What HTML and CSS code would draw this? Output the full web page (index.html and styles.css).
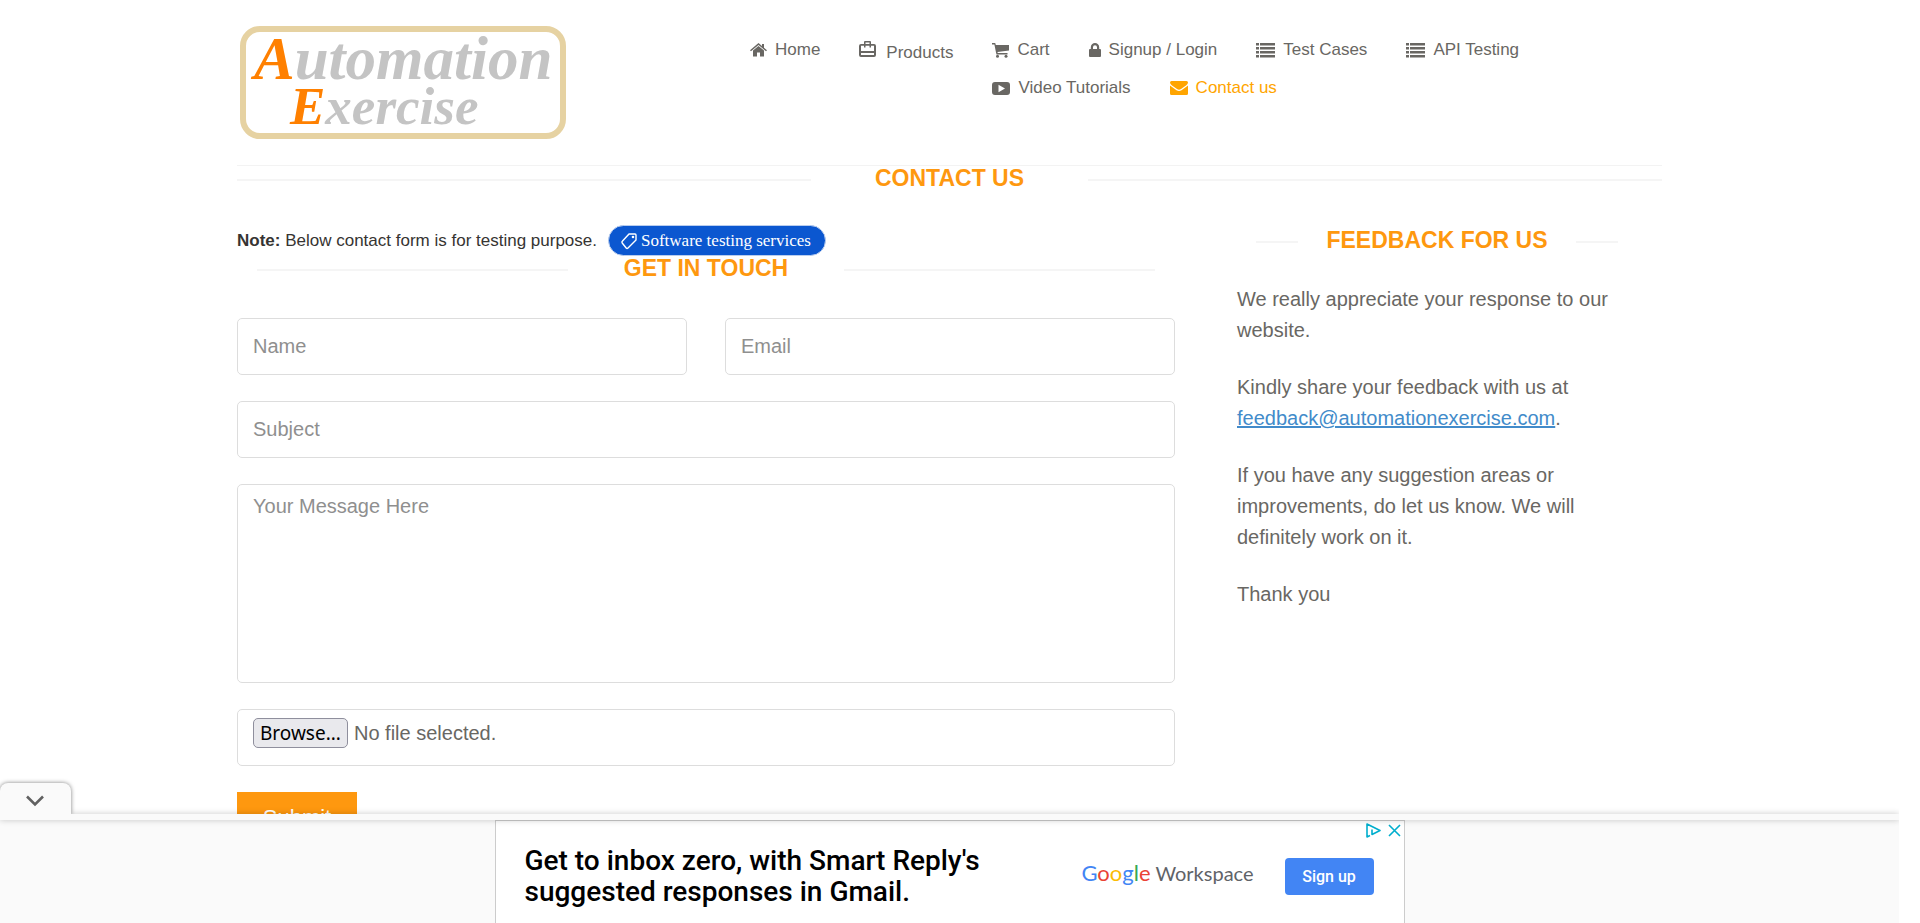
FILE: index.html
```html
<!DOCTYPE html>
<html lang="en">
<head>
<meta charset="utf-8">
<title>Automation Exercise - Contact Us</title>
<link rel="stylesheet" href="styles.css">
</head>
<body>
<div class="page">
  <header class="container header">
    <a class="logo" href="#">
      <span class="logo-line"><span class="logo-cap">A</span>utomation</span>
      <span class="logo-line logo-second"><span class="logo-cap">E</span>xercise</span>
    </a>
    <nav class="nav">
      <ul class="nav-list">
        <li><a href="#"><svg class="icon" width="17" height="14" viewBox="0 0 17 14"><path d="M8.500 3 3 7.600V13.500H7V9.500H10V13.500H14V7.600Z"/><path d="M8.500 0 0 7.200 1 8.300 8.500 2 16 8.300 17 7.200 14 4.700V1H12V3Z"/></svg>Home</a></li>
        <li class="nav-tall"><a href="#"><svg class="icon icon-bag" width="17" height="17" viewBox="0 0 17 17"><path fill-rule="evenodd" d="M5 3V1Q5 0 6 0H11Q12 0 12 1V3H15Q17 3 17 5V14Q17 16 15 16H2Q0 16 0 14V5Q0 3 2 3ZM6.500 3H10.500V1.500H6.500ZM2 4.800V10H15V4.800H12V6.500H10.500V4.800H6.500V6.500H5V4.800ZM2 12V14H15V12Z"/></svg>Products</a></li>
        <li><a href="#"><svg class="icon" width="17" height="15" viewBox="0 0 17 15"><path d="M0 0H3.200L3.800 2H17V7.500L5.500 9 5.700 10H15.500V11.500H4.500L4 9.500 2.400 1.500H0Z"/><circle cx="5.500" cy="13.300" r="1.500"/><circle cx="14" cy="13.300" r="1.500"/></svg>Cart</a></li>
        <li><a href="#"><svg class="icon" width="12" height="15" viewBox="0 0 12 15"><path fill-rule="evenodd" d="M1.800 6V4.200A4.200 4.200 0 0 1 10.200 4.200V6H11Q12 6 12 7V13Q12 14 11 14H1Q0 14 0 13V7Q0 6 1 6ZM4 6H8V4.200A2 2 0 0 0 4 4.200Z"/></svg>Signup / Login</a></li>
        <li><a href="#"><svg class="icon" width="19" height="15" viewBox="0 0 19 15"><path d="M0 0H3V2.600H0ZM4 0H19V2.600H4ZM0 4H3V6.600H0ZM4 4H19V6.600H4ZM0 8H3V10.600H0ZM4 8H19V10.600H4ZM0 12H3V14.600H0ZM4 12H19V14.600H4Z"/></svg>Test Cases</a></li>
        <li><a href="#"><svg class="icon" width="19" height="15" viewBox="0 0 19 15"><path d="M0 0H3V2.600H0ZM4 0H19V2.600H4ZM0 4H3V6.600H0ZM4 4H19V6.600H4ZM0 8H3V10.600H0ZM4 8H19V10.600H4ZM0 12H3V14.600H0ZM4 12H19V14.600H4Z"/></svg>API Testing</a></li>
        <li><a href="#"><svg class="icon" width="18" height="13" viewBox="0 0 18 13"><path fill-rule="evenodd" d="M3 0Q9-.4 15 0 18 0 18 3V10Q18 13 15 13 9 13.400 3 13 0 13 0 10V3Q0 0 3 0ZM6.500 2.800V10.200L13 6.500Z"/></svg>Video Tutorials</a></li>
        <li><a class="active" href="#"><svg class="icon" width="18" height="14" viewBox="0 0 18 14"><path d="M1.500 0H16.500Q18 0 18 1.500 18 3 16 4.500L11 8Q9 9.500 7 8L2 4.500Q0 3 0 1.500 0 0 1.500 0Z"/><path d="M0 4.500 6.500 9.200Q9 10.800 11.500 9.200L18 4.500V12.500Q18 14 16.500 14H1.500Q0 14 0 12.500Z"/></svg>Contact us</a></li>
      </ul>
    </nav>
  </header>
  <main class="container main">
    <h2 class="title title-page">Contact Us</h2>
    <div class="columns">
      <section class="contact">
        <p class="note"><span><b>Note:</b> Below contact form is for testing purpose.</span><a class="pill" href="#"><svg width="16" height="18" viewBox="0 0 16 18" fill="none" stroke="#fff" stroke-width="1.400" stroke-linejoin="round"><path d="M8 2H14Q15 2 15 3V8L7 16Q6 17 5.200 16L1.200 11Q.6 10 1.300 9.300Z"/><circle cx="12" cy="5" r=".6"/></svg>Software testing services</a></p>
        <h2 class="title title-form">Get In Touch</h2>
        <form class="form">
          <input class="field" type="text" placeholder="Name" aria-label="Name">
          <input class="field" type="email" placeholder="Email" aria-label="Email">
          <input class="field wide" type="text" placeholder="Subject" aria-label="Subject">
          <textarea class="field message wide" placeholder="Your Message Here" aria-label="Your Message Here"></textarea>
          <label class="field upload wide"><input class="upload-input" type="file"><span class="browse">Browse...</span><span>No file selected.</span></label>
          <button class="submit" type="button">Submit</button>
        </form>
      </section>
      <aside class="feedback">
        <h2 class="title title-feedback">Feedback For Us</h2>
        <p>We really appreciate your response to our website.</p>
        <p>Kindly share your feedback with us at <a href="#">feedback@automationexercise.com</a>.</p>
        <p>If you have any suggestion areas or improvements, do let us know. We will definitely work on it.</p>
        <p>Thank you</p>
      </aside>
    </div>
  </main>
</div>
<div class="anchor">
  <button class="collapse" type="button" aria-label="Hide advertisement"><svg width="18" height="12" viewBox="0 0 18 12"><path d="M1 1.500 9 9.500 17 1.500" fill="none" stroke="#616161" stroke-width="2.600"/></svg></button>
  <div class="anchor-band"></div>
  <div class="anchor-body">
    <div class="ad">
      <p class="ad-text">Get to inbox zero, with Smart Reply's suggested responses in Gmail.</p>
      <p class="brand"><span class="google"><span class="blue">G</span><span class="red">o</span><span class="yellow">o</span><span class="blue">g</span><span class="green">l</span><span class="red">e</span></span> Workspace</p>
      <button class="signup" type="button">Sign up</button>
      <div class="ad-tools">
        <svg width="15" height="15" viewBox="0 0 15 15" fill="none" stroke="#00aecd" stroke-width="1.600" stroke-linejoin="round"><path d="M4 12.500 1 14V1L14 7.500 6 11.500V6.500M6 3.800V5"/></svg>
        <svg width="13" height="13" viewBox="0 0 13 13" fill="none" stroke="#00aecd" stroke-width="1.600"><path d="M1 1 12 12M12 1 1 12"/></svg>
      </div>
    </div>
  </div>
</div>
</body>
</html>
```
FILE: styles.css
```css
* { box-sizing: border-box; }
body {
  margin: 0;
  background: #fff;
  color: #696763;
  font-family: "Liberation Sans", Arial, sans-serif;
  font-size: 17px;
}
p, h2, ul { margin: 0; padding: 0; }
.page { margin-right: 21px; }
.container { max-width: 1425px; margin: 0 auto; }

/* header */
.header {
  display: flex;
  justify-content: space-between;
  align-items: flex-start;
  padding: 26px 0;
  border-bottom: 1px solid #f3f3f3;
}
.logo {
  display: block;
  width: 326px;
  height: 113px;
  margin-left: 3px;
  padding: 2px 8px;
  border: 6px solid #e6d2a2;
  border-radius: 20px;
  color: #c4c4c4;
  font-family: "Liberation Serif", serif;
  font-style: italic;
  font-weight: bold;
  font-size: 61px;
  line-height: 50px;
  text-decoration: none;
}
.logo-line { display: block; }
.logo-second { padding-left: 36px; font-size: 53px; line-height: 44px; }
.logo-cap { color: #ff8000; }
.nav { width: 64%; padding-top: 14px; }
.nav-list { list-style: none; display: flow-root; }
.nav-list li { float: left; height: 38px; padding-right: 39px; }
.nav-list .nav-tall { height: 40px; padding-top: 1px; }
.nav-list a {
  display: flex;
  align-items: center;
  gap: 8px;
  color: #696763;
  line-height: 20px;
  text-decoration: none;
}
.nav-list .active { color: orange; }
.icon { fill: currentColor; }
.icon-bag { margin: 0 2px 6px 0; }

/* headings with rules */
.title {
  display: flex;
  align-items: center;
  justify-content: center;
  color: #fe980f;
  font-size: 23px;
  line-height: 24px;
  font-weight: bold;
  text-transform: uppercase;
}
.title::before, .title::after {
  content: "";
  flex: 1;
  height: 2px;
  margin-top: 4px;
  background: #f5f5f5;
}
.title-page { gap: 64px; }
.title-form { gap: 56px; padding: 0 20px; }
.title-feedback { gap: 28px; padding: 0 19px; margin-bottom: 32px; }

/* columns */
.columns { display: flex; gap: 62px; padding-top: 35px; }
.contact { flex: 938; min-width: 0; }
.feedback { flex: 400; min-width: 0; margin-right: 25px; padding-top: 3px; font-size: 20px; line-height: 31px; }
.feedback p { margin-bottom: 26px; }
.feedback a { color: #428bca; }
.note { display: flex; align-items: center; gap: 11px; height: 31px; color: #363432; }
.pill {
  display: flex;
  align-items: center;
  gap: 4px;
  height: 31px;
  padding: 0 14px 0 12px;
  border: 1px solid #b9cdee;
  border-radius: 16px;
  background: #0b57d0;
  color: #fff;
  font-family: "Liberation Serif", serif;
  text-decoration: none;
}

/* form */
.form { display: grid; grid-template-columns: 1fr 1fr; gap: 26px 38px; padding-top: 38px; }
.field {
  width: 100%;
  height: 57px;
  margin: 0;
  padding: 0 15px;
  border: 1px solid #ddd;
  border-radius: 5px;
  background: #fff;
  color: #696763;
  font-family: inherit;
  font-size: 20px;
}
.field::placeholder { color: #8f8f8f; }
.wide { grid-column: 1 / -1; }
.message { display: block; height: 199px; padding: 7px 15px; line-height: 29px; resize: none; }
.upload { display: flex; align-items: flex-start; gap: 6px; padding-top: 8px; line-height: 30px; }
.upload-input { position: absolute; width: 1px; height: 1px; opacity: 0; }
.browse {
  padding: 0 6px;
  border: 1px solid #8f8f9d;
  border-radius: 5px;
  background: #e9e9ed;
  color: #000;
  font-family: "Noto Sans", sans-serif;
  font-size: 19px;
  line-height: 28px;
}
.submit {
  justify-self: start;
  width: 120px;
  height: 51px;
  border: 0;
  background: #fe980f;
  color: #fff;
  font-family: inherit;
  font-size: 22px;
}

/* bottom anchored advertisement */
.anchor { position: fixed; left: 0; right: 21px; bottom: 0; }
.collapse {
  position: absolute;
  z-index: 2;
  left: 0;
  bottom: 109px;
  display: flex;
  align-items: center;
  width: 71px;
  height: 31px;
  padding: 4px 26px 0;
  border: 0;
  border-radius: 8px 8px 0 0;
  background: #fafafa;
  box-shadow: 0 0 4px rgba(0, 0, 0, 0.5);
  clip-path: inset(-5px -5px 0 0);
}
.anchor-band {
  position: relative;
  z-index: 1;
  height: 6px;
  background: #fafafa;
  box-shadow: 0 0 6px rgba(0, 0, 0, 0.22);
  clip-path: inset(-12px 0);
}
.anchor-body { height: 103px; background: #fafafa; }
.ad {
  position: relative;
  display: flex;
  align-items: flex-start;
  width: 910px;
  height: 103px;
  margin: 0 auto;
  padding: 24px 30px 0 29px;
  border: 1px solid #ccc;
  border-bottom: 0;
  background: #fff;
}
.ad-text {
  flex: 1;
  padding-right: 60px;
  color: #000;
  font-family: Roboto, sans-serif;
  font-size: 28px;
  font-weight: 500;
  line-height: 31px;
}
.brand { margin-right: 31px; padding-top: 15px; color: #5f6368; font-family: Lato, sans-serif; font-size: 20px; line-height: 26px; }
.google { font-size: 22px; }
.blue { color: #4285f4; }
.red { color: #ea4335; }
.yellow { color: #fbbc05; }
.green { color: #34a853; }
.signup {
  width: 89px;
  height: 37px;
  margin-top: 13px;
  border: 0;
  border-radius: 4px;
  background: #4285f4;
  color: #fff;
  font-family: Roboto, sans-serif;
  font-size: 16px;
  font-weight: 500;
}
.ad-tools { position: absolute; top: 2px; right: 3px; display: flex; align-items: center; gap: 7px; }
```
